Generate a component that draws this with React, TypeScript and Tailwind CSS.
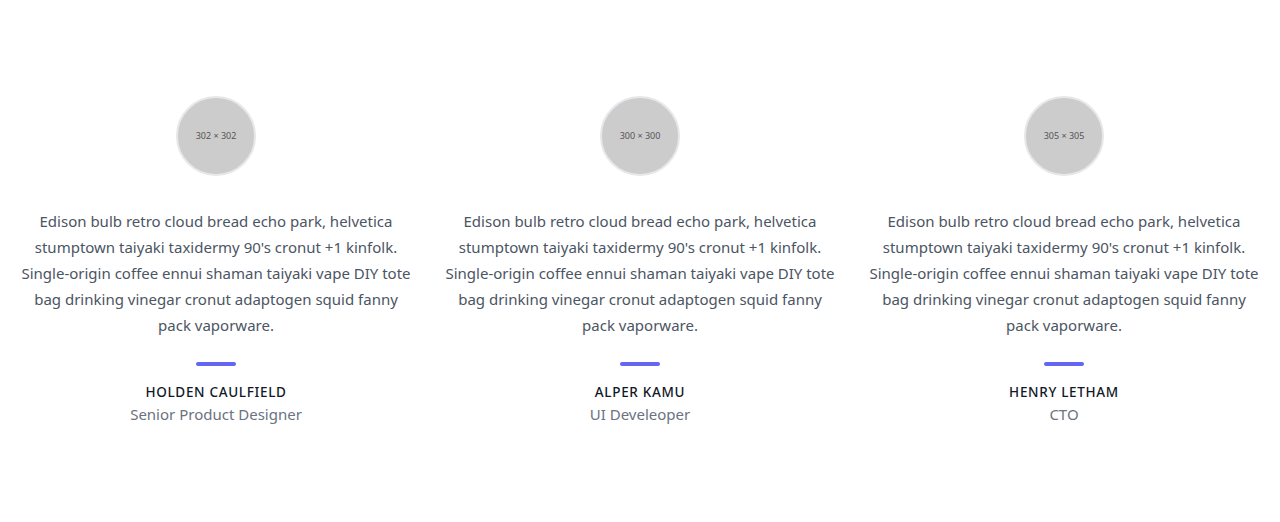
const people = [
  { size: '302 × 302', name: 'HOLDEN CAULFIELD', role: 'Senior Product Designer' },
  { size: '300 × 300', name: 'ALPER KAMU', role: 'UI Develeoper' },
  { size: '305 × 305', name: 'HENRY LETHAM', role: 'CTO' },
];

const quote =
  "Edison bulb retro cloud bread echo park, helvetica stumptown taiyaki taxidermy 90's cronut +1 kinfolk. Single-origin coffee ennui shaman taiyaki vape DIY tote bag drinking vinegar cronut adaptogen squid fanny pack vaporware.";

export default function App() {
  return (
    <section className="bg-white text-[#4b5563] font-['Noto_Sans',sans-serif]">
      <div className="mx-auto max-w-[1280px] px-5 py-24">
        <div className="-m-4 flex flex-wrap">
          {people.map((p) => (
            <div key={p.name} className="w-1/3 p-4">
              <div className="flex h-full flex-col items-center text-center">
                <div className="mb-8 flex h-20 w-20 items-center justify-center rounded-full border-2 border-[#e5e7eb] bg-[#cccccc] text-[9px] text-[#555]">
                  {p.size}
                </div>
                <p className="text-[15px] leading-[26px]">{quote}</p>
                <span className="mt-6 mb-4 block h-1 w-10 rounded bg-[#6366f1]" />
                <h2 className="text-[13.5px] leading-5 font-medium tracking-wider text-[#111827]">{p.name}</h2>
                <p className="text-[15px] leading-6 text-[#6b7280]">{p.role}</p>
              </div>
            </div>
          ))}
        </div>
      </div>
    </section>
  );
}
